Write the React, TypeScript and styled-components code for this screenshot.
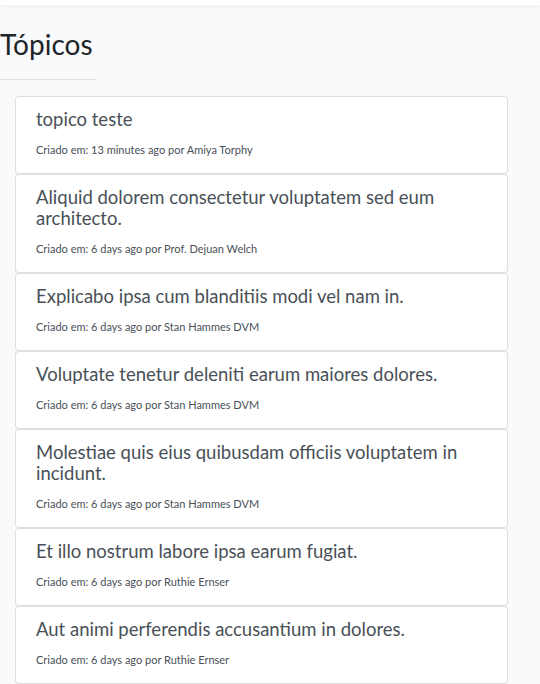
import styled, { createGlobalStyle } from "styled-components";

const GlobalStyle = createGlobalStyle`
  html, body {
    margin: 0;
    padding: 0;
    background: #f8fafc;
    font-family: Lato, "Noto Sans", sans-serif;
    color: #212529;
  }
`;

const TopBar = styled.div`
  height: 5px;
  background: #ffffff;
  box-shadow: 0 2px 4px rgba(0, 0, 0, 0.04);
`;

const Header = styled.header`
  padding-top: 21px;
`;

const Title = styled.h2`
  margin: 0;
  font-size: 28px;
  font-weight: 400;
  line-height: 36px;
  color: #212529;
`;

const Rule = styled.hr`
  width: 97px;
  margin: 17px 0 16px 0;
  border: 0;
  border-top: 1px solid rgba(0, 0, 0, 0.1);
`;

const TopicList = styled.ul`
  list-style: none;
  margin: 0 32px 0 15px;
  padding: 0;
`;

const Topic = styled.li`
  background: #ffffff;
  border: 1px solid rgba(0, 0, 0, 0.125);
  border-radius: 4px;
  padding: 12px 20px 15px 20px;
`;

const TopicTitle = styled.div`
  font-size: 18.5px;
  line-height: 21px;
  color: #495057;
`;

const Meta = styled.small`
  display: block;
  margin-top: 12px;
  font-size: 11px;
  line-height: 16px;
  color: #495057;
`;

interface ITopic {
  id: number;
  title: string;
  when: string;
  author: string;
}

const topics: ITopic[] = [
  { id: 1, title: "topico teste", when: "13 minutes ago", author: "Amiya Torphy" },
  { id: 2, title: "Aliquid dolorem consectetur voluptatem sed eum architecto.", when: "6 days ago", author: "Prof. Dejuan Welch" },
  { id: 3, title: "Explicabo ipsa cum blanditiis modi vel nam in.", when: "6 days ago", author: "Stan Hammes DVM" },
  { id: 4, title: "Voluptate tenetur deleniti earum maiores dolores.", when: "6 days ago", author: "Stan Hammes DVM" },
  { id: 5, title: "Molestiae quis eius quibusdam officiis voluptatem in incidunt.", when: "6 days ago", author: "Stan Hammes DVM" },
  { id: 6, title: "Et illo nostrum labore ipsa earum fugiat.", when: "6 days ago", author: "Ruthie Ernser" },
  { id: 7, title: "Aut animi perferendis accusantium in dolores.", when: "6 days ago", author: "Ruthie Ernser" },
];

function App() {
  return (
    <>
      <GlobalStyle />
      <TopBar />
      <Header>
        <Title>Tópicos</Title>
        <Rule />
      </Header>
      <TopicList>
        {topics.map((topic) => (
          <Topic key={topic.id}>
            <TopicTitle>{topic.title}</TopicTitle>
            <Meta>
              Criado em: {topic.when} por {topic.author}
            </Meta>
          </Topic>
        ))}
      </TopicList>
    </>
  );
}

export default App;
